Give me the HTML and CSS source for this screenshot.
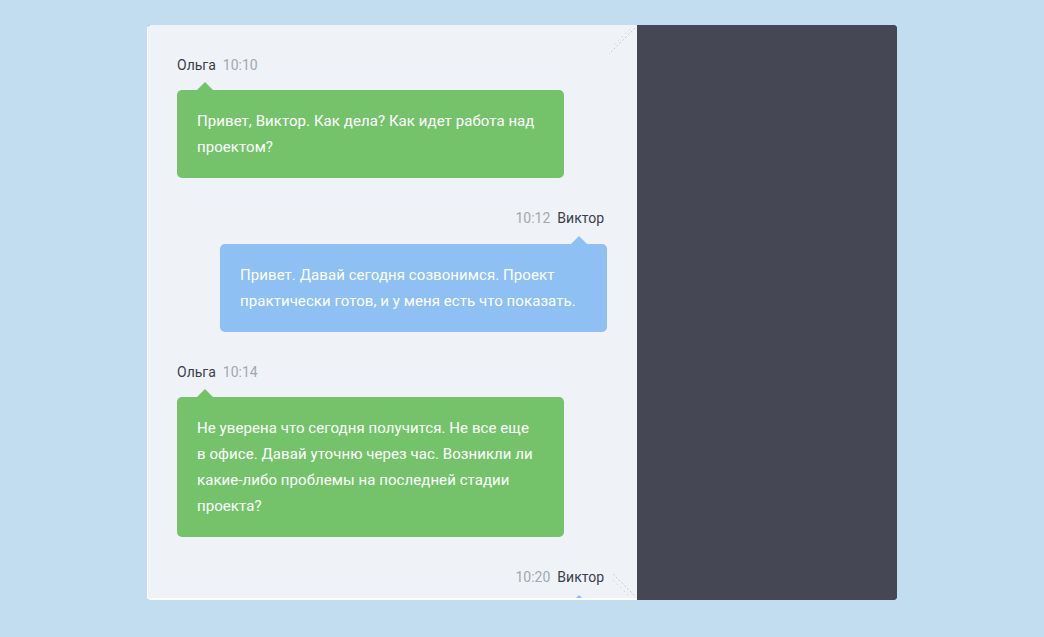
FILE: index.html
```html
<!DOCTYPE html>
<html lang="ru">
<head>
<meta charset="utf-8">
<link rel="stylesheet" href="styles.css">
</head>
<body>
<div class="frame">
  <div class="chat">
    <div class="msg msg-left">
      <div class="meta"><span class="name">Ольга</span><span class="time">10:10</span></div>
      <div class="bubble green">Привет, Виктор. Как дела? Как идет работа над проектом?</div>
    </div>
    <div class="msg msg-right">
      <div class="meta"><span class="time">10:12</span><span class="name">Виктор</span></div>
      <div class="bubble blue">Привет. Давай сегодня созвонимся. Проект практически готов, и у меня есть что показать.</div>
    </div>
    <div class="msg msg-left">
      <div class="meta"><span class="name">Ольга</span><span class="time">10:14</span></div>
      <div class="bubble green">Не уверена что сегодня получится. Не все еще в&nbsp;офисе. Давай уточню через час. Возникли ли какие-либо проблемы на последней стадии проекта?</div>
    </div>
    <div class="msg msg-right">
      <div class="meta"><span class="time">10:20</span><span class="name">Виктор</span></div>
      <div class="bubble blue empty"></div>
    </div>
    <svg class="curl curl-top" width="28" height="28" viewBox="0 0 28 28">
      <line x1="27" y1="1" x2="1" y2="27" stroke="#c9ccd3" stroke-width="1" stroke-dasharray="2 2"/>
      <line x1="22" y1="2" x2="5" y2="19" stroke="#d6d9df" stroke-width="1" stroke-dasharray="2 3"/>
    </svg>
    <svg class="curl curl-bottom" width="24" height="24" viewBox="0 0 24 24">
      <line x1="1" y1="1" x2="23" y2="23" stroke="#c9ccd3" stroke-width="1" stroke-dasharray="2 2"/>
      <line x1="1" y1="7" x2="17" y2="23" stroke="#d6d9df" stroke-width="1" stroke-dasharray="2 3"/>
    </svg>
  </div>
  <div class="side"></div>
</div>
</body>
</html>
```

FILE: styles.css
```css
html, body {
  margin: 0;
  padding: 0;
}
body {
  background: #c2ddef;
  font-family: Roboto, "Liberation Sans", sans-serif;
  height: 637px;
  overflow: hidden;
}
.frame {
  width: 750px;
  height: 575px;
  margin: 25px auto 0;
  display: flex;
  background: #454755;
  border-radius: 4px;
  overflow: hidden;
}
.chat {
  position: relative;
  box-sizing: border-box;
  width: 490px;
  height: 575px;
  padding: 32px 30px 0 29px;
  background: #eff3f7;
  border-left: 1px solid #ffffff;
  border-bottom: 2px solid #ffffff;
  overflow: hidden;
  display: flex;
  flex-direction: column;
  gap: 32px;
  flex-shrink: 0;
}
.side {
  flex: 1;
  background: #454755;
}
.msg {
  display: flex;
  flex-direction: column;
}
.msg-left { align-items: flex-start; }
.msg-right { align-items: flex-end; }
.meta {
  font-size: 14px;
  line-height: 16px;
  height: 16px;
  display: flex;
  gap: 7px;
  margin-bottom: 17px;
}
.msg-right .meta {
  margin-bottom: 18px;
  padding-right: 3px;
}
.name { color: #3a3d4b; }
.time { color: #a3a7ae; }
.bubble {
  position: relative;
  box-sizing: border-box;
  width: 387px;
  padding: 18px 20px;
  border-radius: 5px;
  color: #ffffff;
  font-size: 15px;
  line-height: 26px;
  letter-spacing: 0.07px;
}
.bubble.empty { height: 60px; }
.bubble::before {
  content: "";
  position: absolute;
  top: -8px;
  width: 0;
  height: 0;
  border-left: 8px solid transparent;
  border-right: 8px solid transparent;
  border-bottom: 8px solid;
}
.msg-left .bubble::before { left: 20px; }
.msg-right .bubble::before { right: 20px; }
.green { background: #74c36b; }
.green::before { border-bottom-color: #74c36b; }
.blue { background: #8ec0f4; }
.blue::before { border-bottom-color: #8ec0f4; }
.curl {
  position: absolute;
  right: 1px;
}
.curl-top { top: 2px; }
.curl-bottom { bottom: 1px; }
```
